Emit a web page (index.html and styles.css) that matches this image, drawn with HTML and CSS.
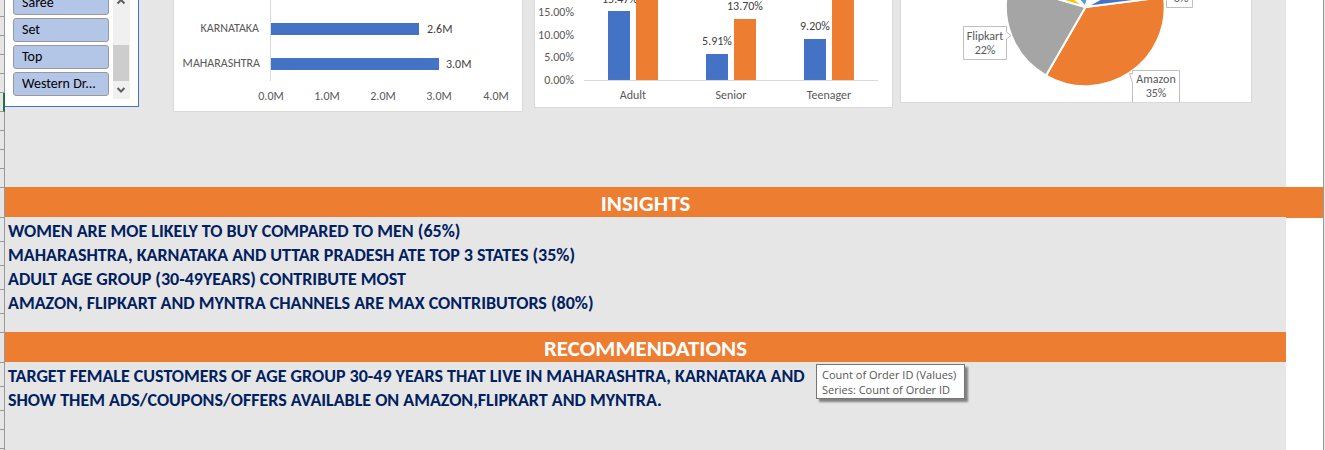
FILE: index.html
```
<!DOCTYPE html>
<html lang="en">
<head>
<meta charset="utf-8">
<title>Sales dashboard</title>
<link rel="stylesheet" href="styles.css">
</head>
<body>
<div class="workbook">
  <div class="row-heads" aria-hidden="true">
    <i class="h-17"></i><i></i><i></i><i></i><i></i><i class="active"></i><i></i><i></i><i></i><i></i>
    <i class="h-30"></i><i class="h-24"></i><i class="h-24"></i><i class="h-24"></i><i class="h-24"></i><i></i>
    <i class="h-30"></i><i class="h-24"></i><i class="h-24"></i><i></i><i></i>
  </div>
  <main class="sheet">
    <section class="dashboard">
      <div class="slicer">
        <div class="options">
          <button type="button">Saree</button>
          <button type="button">Set</button>
          <button type="button">Top</button>
          <button type="button">Western Dr...</button>
        </div>
        <div class="scrollbar">
          <svg class="arrow" viewBox="0 0 17 18"><path d="M4.500 12.500 8 9 11.500 12.500"/></svg>
          <div class="track"><div class="thumb"></div></div>
          <svg class="arrow" viewBox="0 0 17 18"><path d="M4.500 7 8 10.500 11.500 7"/></svg>
        </div>
      </div>

      <figure class="card states">
        <svg viewBox="0 0 348 111">
          <path class="axis" d="M96.500 0V81"/>
          <rect class="blue" x="97" y="23" width="148" height="12"/>
          <rect class="blue" x="97" y="58" width="168" height="12"/>
          <g class="end"><text x="85" y="32">KARNATAKA</text><text x="86" y="67">MAHARASHTRA</text></g>
          <g class="value"><text x="253" y="33">2.6M</text><text x="272" y="68">3.0M</text></g>
          <g class="mid"><text x="97" y="100">0.0M</text><text x="153" y="100">1.0M</text><text x="209" y="100">2.0M</text><text x="265" y="100">3.0M</text><text x="322" y="100">4.0M</text></g>
        </svg>
      </figure>

      <figure class="card ages">
        <svg viewBox="0 0 357 107">
          <g class="end"><text x="39" y="16">15.00%</text><text x="39" y="39">10.00%</text><text x="39" y="61">5.00%</text><text x="39" y="84">0.00%</text></g>
          <g class="value mid"><text x="85" y="3">15.47%</text><text x="182" y="45">5.91%</text><text x="210" y="10">13.70%</text><text x="280" y="30">9.20%</text></g>
          <g class="blue"><rect x="73" y="11" width="22" height="69"/><rect x="171" y="54" width="22" height="26"/><rect x="269" y="39" width="22" height="41"/></g>
          <g class="orange"><rect x="101" y="0" width="22" height="80"/><rect x="199" y="19" width="22" height="61"/><rect x="297" y="0" width="22" height="80"/></g>
          <path class="axis" d="M49 80.500H343"/>
          <g class="mid"><text x="98" y="99">Adult</text><text x="196" y="99">Senior</text><text x="294" y="99">Teenager</text></g>
        </svg>
      </figure>

      <figure class="card channels">
        <svg viewBox="0 0 350 102">
          <g class="pie">
            <path fill="#ed7d31" d="M184.500 7 263 -3A79 79 0 0 1 145 75.500Z"/>
            <path fill="#a5a5a5" d="M184.500 7 145 75.500A79 79 0 0 1 108 -15Z"/>
            <path fill="#ffc000" d="M184.500 7 108 -15 130 -32Z"/>
            <path fill="#5b9bd5" d="M184.500 7 142 -40 205 -60Z"/>
            <path fill="#70ad47" d="M184.500 7 205 -60 212 -60Z"/>
            <path fill="#264478" d="M184.500 7 222 -40 227 -38Z"/>
            <path fill="#4472c4" d="M184.500 7 240 -23 263 -3Z"/>
          </g>
          <g class="callout">
            <path d="M62.500 26.500H105.500V32L110 35.500 105.500 39V59.500H62.500Z"/>
            <path d="M278.500 102V70.500H231.500V74L228.500 73 231.500 83V102"/>
            <path d="M265.500 0V7.500H291.500V0"/>
          </g>
          <g class="mid"><text x="84" y="40">Flipkart</text><text x="84" y="54">22%</text><text x="255" y="83">Amazon</text><text x="255" y="97">35%</text><text x="280" y="2">8%</text></g>
        </svg>
      </figure>
    </section>

    <h2 class="banner">INSIGHTS</h2>
    <section class="notes insights">
      <p>WOMEN ARE MOE LIKELY TO BUY COMPARED TO MEN (65%)</p>
      <p>MAHARASHTRA, KARNATAKA AND UTTAR PRADESH ATE TOP 3 STATES (35%)</p>
      <p>ADULT AGE GROUP (30-49YEARS) CONTRIBUTE MOST</p>
      <p>AMAZON, FLIPKART AND MYNTRA CHANNELS ARE MAX CONTRIBUTORS (80%)</p>
    </section>
    <h2 class="banner">RECOMMENDATIONS</h2>
    <section class="notes">
      <p>TARGET FEMALE CUSTOMERS OF AGE GROUP 30-49 YEARS THAT LIVE IN MAHARASHTRA, KARNATAKA AND</p>
      <p>SHOW THEM ADS/COUPONS/OFFERS AVAILABLE ON AMAZON,FLIPKART AND MYNTRA.</p>
    </section>
    <div class="tooltip" role="tooltip">Count of Order ID (Values)<br>Series: Count of Order ID</div>
  </main>
  <div class="margin"><div class="banner-end"></div></div>
</div>
</body>
</html>
```
FILE: styles.css
```
* { box-sizing: border-box; }
body { margin: 0; background: #e6e6e6; font-family: Carlito, Lato, "Open Sans", sans-serif; }
.workbook { display: flex; min-height: 100vh; padding-right: 1px; overflow: hidden; }

.row-heads { flex: none; width: 5px; border-right: 1px solid #999; background: #e6e6e6; }
.row-heads i { display: block; height: 19px; border-bottom: 1px solid #999; }
.row-heads .h-17 { height: 17px; }
.row-heads .h-24 { height: 24px; }
.row-heads .h-30 { height: 30px; }
.row-heads .active { margin-right: -1px; border-right: 2px solid #217346; }

.sheet { position: relative; flex: 1; min-width: 0; background: #e6e6e6; }
.dashboard { display: flex; align-items: flex-start; height: 187px; padding-right: 34px; }

.slicer { display: flex; align-items: flex-end; gap: 4px; flex: none; width: 134px; height: 107px; margin-right: 34px; padding: 0 8px 7px; overflow: hidden; background: #fff; border: solid #4472c4; border-width: 0 1px 1px 0; }
.options { display: flex; flex-direction: column; gap: 3px; width: 96px; padding-bottom: 3px; }
.options button { flex: none; height: 24px; padding: 0 8px; border: 1px solid #999; border-radius: 3px; background: #b4c6e7; color: #000; font: 14px/22px Carlito, "Open Sans", sans-serif; text-align: left; white-space: nowrap; }
.scrollbar { display: flex; flex-direction: column; flex: none; width: 17px; height: 108px; background: #f0f0f0; }
.arrow { display: block; flex: none; width: 17px; height: 18px; fill: none; stroke: #606060; stroke-width: 2; }
.track { display: flex; flex: 1; align-items: flex-end; }
.thumb { width: 16px; height: 36px; background: #cdcdcd; }

.card { min-width: 0; margin: 0; background: #fff; border: solid #d9d9d9; border-width: 0 1px 1px; }
.card svg { display: block; width: 100%; font-size: 12px; fill: #595959; }
.states { flex: 350; margin-right: 11px; }
.ages { flex: 359; margin-right: 7px; }
.channels { flex: 352; }
.axis { stroke: #d9d9d9; }
.card .blue { fill: #4472c4; }
.card .orange { fill: #ed7d31; }
.end { text-anchor: end; }
.mid { text-anchor: middle; }
.value { fill: #404040; }
.pie { stroke: #fff; stroke-width: 2; stroke-linejoin: round; }
.callout { fill: #fff; stroke: #bfbfbf; }

.banner { height: 30px; margin: 0; background: #ed7d31; color: #fff; font-size: 23px; font-weight: 700; line-height: 33px; text-align: center; }
.notes { padding-top: 2px; padding-left: 3px; color: #002060; font-size: 18px; font-weight: 700; white-space: nowrap; }
.notes p { margin: 0; line-height: 24px; }
.insights { padding-bottom: 17px; }

.tooltip { position: absolute; left: 811px; top: 364px; padding: 2px 8px 1px 5px; border: 1px solid #767676; background: #fff; box-shadow: 3px 3px 2px #808080; color: #575757; font: 11px/15px "Open Sans", sans-serif; white-space: nowrap; }

.margin { flex: none; width: 38px; padding-top: 187px; background: #fff; border-right: 1px solid #999; }
.banner-end { height: 31px; background: #ed7d31; }
```
